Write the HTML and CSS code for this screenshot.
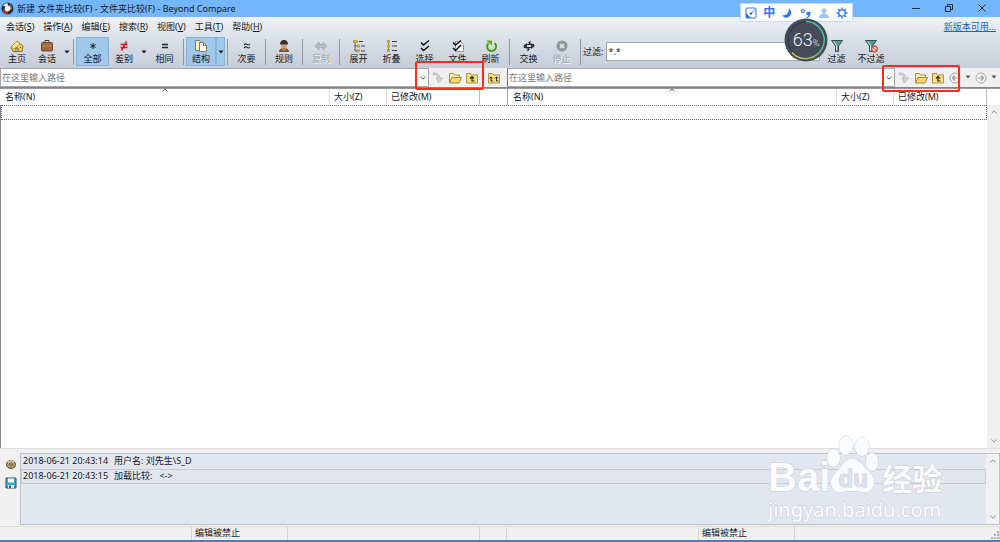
FILE: index.html
```html
<!DOCTYPE html>
<html lang="zh-CN">
<head>
<meta charset="utf-8">
<title>新建 文件夹比较(F) - Beyond Compare</title>
<link rel="stylesheet" href="styles.css">
</head>
<body>
<svg class="defs" aria-hidden="true">
  <symbol id="chev" viewBox="0 0 8 8"><path d="M1.500 2.500 4 5.200 6.500 2.500" fill="none" stroke="currentColor"/></symbol>
  <symbol id="tri" viewBox="0 0 6 4"><path d="M.5.5h5L3 3.500z" fill="currentColor"/></symbol>
  <symbol id="go" viewBox="0 0 14 14"><path d="M2 2c4-.5 7 1.500 7 5h3l-4.500 5L5 7h2C7 5 5 3.500 2 3.500z" fill="#d3d3d3" stroke="#b4b4b4" stroke-width=".7"/></symbol>
  <symbol id="open" viewBox="0 0 14 14"><path d="M1.500 12V2.500h4l1 1.500h5v2.500" fill="#fff0a8" stroke="#a88d45"/><path d="M1.500 12 4 6.500h9.500L11 12z" fill="#f6d768" stroke="#a0853d"/></symbol>
  <symbol id="up" viewBox="0 0 14 14"><path d="M1.500 12V2.500h4l1 1.500h6v8z" fill="#f8de7a" stroke="#ab954e"/><path d="M9.500 10H7V6M5 7.500 7 5.500l2 2" fill="none" stroke="#26221a" stroke-width="1.100"/></symbol>
  <symbol id="upup" viewBox="0 0 14 14"><path d="M1.500 12V2.500h4l1 1.500h6v8z" fill="#f8de7a" stroke="#ab954e"/><path d="M6 10H4V6M2.500 7.500 4 5.800l1.500 1.700M11.500 10h-2V6M8 7.500l1.500-1.700L11 7.500" fill="none" stroke="#26221a" stroke-width=".9"/></symbol>
  <symbol id="back" viewBox="0 0 14 14"><circle cx="7" cy="7" r="5" fill="#f4f4f4" stroke="#aaa"/><path d="M10 7H4.500M7 4.500 4.500 7 7 9.500" fill="none" stroke="#999" stroke-width="1.200"/></symbol>
  <symbol id="fwd" viewBox="0 0 14 14"><circle cx="7" cy="7" r="5" fill="#f4f4f4" stroke="#aaa"/><path d="M4 7h5.500M7 4.500 9.500 7 7 9.500" fill="none" stroke="#999" stroke-width="1.200"/></symbol>
  <symbol id="funnel" viewBox="0 0 14 14"><path d="M1.500 1.500h11L8.500 7v5.500h-3V7z" fill="#519b98" stroke="#3f4c50"/><path d="M4 2.500 6.500 6.500v5" stroke="#c9efe9" fill="none"/></symbol>
</svg>

<header class="title">
  <svg class="logo" viewBox="0 0 14 14"><circle cx="7" cy="7" r="6.500" fill="#2b2b31"/><path d="M2 4a6 6 0 0 1 5-3l1 3-3 1z" fill="#ddd"/><path d="M9 2a6 6 0 0 1 3 6l-3 1z" fill="#777"/><path d="M2 8a5.500 5.500 0 0 0 5 5l1-3-3-2z" fill="#c33b2c"/><circle cx="7" cy="7" r="3" fill="#fff"/></svg>
  <h1>新建 文件夹比较(F) - 文件夹比较(F) - Beyond Compare</h1>
  <div class="wincontrols">
    <button aria-label="最小化"><svg viewBox="0 0 10 10"><path d="M1 5.500h8"/></svg></button>
    <button aria-label="还原"><svg viewBox="0 0 10 10"><path d="M1.500 3.500h5v5h-5zM3.500 3.500v-2h5v5h-2"/></svg></button>
    <button aria-label="关闭"><svg viewBox="0 0 10 10"><path d="m1.500 1.500 7 7m0-7-7 7"/></svg></button>
  </div>
</header>

<div class="chrome">
  <nav class="menu">
    <button>会话(<u>S</u>)</button><button>操作(<u>A</u>)</button><button>编辑(<u>E</u>)</button><button>搜索(<u>R</u>)</button><button>视图(<u>V</u>)</button><button>工具(<u>T</u>)</button><button>帮助(<u>H</u>)</button>
    <a href="#">新版本可用...</a>
  </nav>
  <div class="toolbar">
    <button class="tool narrow"><svg viewBox="0 0 14 14"><path d="M1 8 7 2l6 5-1 5.500H3z" fill="#f1cf52" stroke="#8c7428"/><path d="m1 8 6-6 3 3-6 5z" fill="#fbe98e" stroke="#9b8437" stroke-width=".7"/><path d="M6 12V9h2v3M10 8.500h1" stroke="#6c5617" fill="#fff"/></svg>主页</button>
    <button class="tool narrow"><svg viewBox="0 0 14 14"><path d="M5 3.500v-2h4v2" fill="none" stroke="#533a25"/><rect x="1.500" y="3.500" width="11" height="8.500" rx="1" fill="#a16c43" stroke="#704625"/><path d="M2 7h10" stroke="#bd895e"/></svg>会话</button>
    <button class="drop" aria-label="会话菜单"><svg><use href="#tri"/></svg></button>
    <i class="sep"></i>
    <button class="tool on"><svg viewBox="0 0 14 14"><path d="M7 4v6M4.300 5.500l5.400 3M9.700 5.500l-5.400 3" stroke="#222"/></svg>全部</button>
    <button class="tool narrow"><svg viewBox="0 0 14 14"><path d="M3.500 5.500h7M3.500 8.500h7M9.500 2.500l-5 9" stroke="#e5141c" stroke-width="1.600"/></svg>差别</button>
    <button class="drop" aria-label="差别菜单"><svg><use href="#tri"/></svg></button>
    <button class="tool"><svg viewBox="0 0 14 14"><path d="M4 5.500h6M4 8.500h6" stroke="#222" stroke-width="1.300"/></svg>相同</button>
    <i class="sep"></i>
    <button class="tool narrow on"><svg viewBox="0 0 14 14"><path d="M1.500 1.500h4l1.500 2v8H1.500z" fill="#f9ebbf" stroke="#87765a"/><path d="M5.500 3.500h4l3 3v6h-7z" fill="#fffdf6" stroke="#87765a"/><path d="M9.500 3.500v3h3" fill="none" stroke="#87765a"/></svg>结构</button>
    <button class="drop on" aria-label="结构菜单"><svg><use href="#tri"/></svg></button>
    <i class="sep"></i>
    <button class="tool"><svg viewBox="0 0 14 14"><path d="M4 6q1.500-2 3-.6T10 5M4 9q1.500-2 3-.6T10 8" fill="none" stroke="#222" stroke-width="1.100"/></svg>次要</button>
    <i class="sep"></i>
    <button class="tool mid-size"><svg viewBox="0 0 14 14"><path d="M2 13q0-4 5-4t5 4z" fill="#795333"/><circle cx="7" cy="6.500" r="3" fill="#dba171"/><path d="M3 5.500q0-4.500 4-4.500t4 4.500z" fill="#38302b"/><path d="m5 9.500 2 2 2-2" stroke="#e7bc72" fill="none"/></svg>规则</button>
    <i class="sep"></i>
    <button class="tool mid-size off" disabled><svg viewBox="0 0 14 14"><path d="m1 7 4-4v2.500h4V3l4 4-4 4V8.500H5V11z" fill="#b9bec4" stroke="#9da2a8" stroke-width=".7"/></svg>复制</button>
    <i class="sep"></i>
    <button class="tool"><svg viewBox="0 0 14 14"><path d="M3 3v9h4M3 7h4M3 3h3" fill="none" stroke="#555"/><path d="M1 1h4v3H1zM5 5.500h3v3H5zM5 10.500h3v2.500H5z" fill="#cda12c"/><path d="M7 2.500h4M9 7h4M9 12h4" stroke="#444"/></svg>展开</button>
    <button class="tool"><svg viewBox="0 0 14 14"><path d="M3.500 2v10" stroke="#777"/><path d="M2 1h3v3H2zM2 5.500h3v3H2zM2 10h3v3H2z" fill="#cda12c"/><path d="M7 2.500h5M7 7h5M7 11.500h5" stroke="#444"/></svg>折叠</button>
    <button class="tool"><svg viewBox="0 0 14 14"><path d="m3 3.500 2.500 2.500L11 1.500M3 9l2.500 2.500L11 7" stroke="#111" stroke-width="1.500" fill="none"/></svg>选择</button>
    <button class="tool"><svg viewBox="0 0 14 14"><path d="M4.500 2.500h5l3 3v7h-8z" fill="#fff" stroke="#999"/><path d="m2 3.500 2.500 2.500L10 1.500M2 9l2.500 2.500L10 6" stroke="#111" stroke-width="1.500" fill="none"/></svg>文件</button>
    <button class="tool"><svg viewBox="0 0 14 14"><path d="M10.500 4a4.500 4.500 0 1 1-6 .2" fill="none" stroke="#4a9c12" stroke-width="2"/><path d="M2 1.500h6v5z" fill="#5cad1d"/></svg>刷新</button>
    <i class="sep"></i>
    <button class="tool"><svg viewBox="0 0 14 14"><path d="M4 5.500h8M2 8.500h8" stroke="#222" stroke-width="1.200"/><path d="m1 7 4-3v6zM13 7 9 4v6z" fill="#333"/><path d="m6 4 2.500-2.500v4zM8 10l-2.500 2.500v-4z" fill="#222"/></svg>交换</button>
    <button class="tool off" disabled><svg viewBox="0 0 14 14"><circle cx="7" cy="7" r="5.500" fill="#92979c"/><path d="m5 5 4 4m0-4L5 9" stroke="#eee" stroke-width="1.600"/></svg>停止</button>
    <i class="sep"></i>
    <label for="filter">过滤:</label>
    <div class="combo filter"><input id="filter" value="*.*"><button aria-label="过滤历史"><svg><use href="#chev"/></svg></button></div>
    <button class="tool"><svg><use href="#funnel"/></svg>过滤</button>
    <button class="tool wide"><svg viewBox="0 0 14 14"><use href="#funnel"/><circle cx="10.500" cy="10" r="2.800" fill="#f7d5cd" stroke="#d8412f" stroke-width="1.200"/><path d="m8.500 8 4 4" stroke="#d8412f"/></svg>不过滤</button>
  </div>
</div>

<main>
  <div class="split paths">
    <div class="path">
      <div class="combo"><input aria-label="左侧路径" placeholder="在这里输入路径"><button aria-label="左侧路径历史"><svg><use href="#chev"/></svg></button></div>
      <button class="ico" aria-label="转到"><svg><use href="#go"/></svg></button>
      <button class="ico" aria-label="打开文件夹"><svg><use href="#open"/></svg></button>
      <button class="ico" aria-label="上一级"><svg><use href="#up"/></svg></button>
    </div>
    <button class="ico mid" aria-label="两侧上一级"><svg><use href="#upup"/></svg></button>
    <div class="path">
      <div class="combo"><input aria-label="右侧路径" placeholder="在这里输入路径"><button aria-label="右侧路径历史"><svg><use href="#chev"/></svg></button></div>
      <button class="ico" aria-label="转到"><svg><use href="#go"/></svg></button>
      <button class="ico" aria-label="打开文件夹"><svg><use href="#open"/></svg></button>
      <button class="ico" aria-label="上一级"><svg><use href="#up"/></svg></button>
      <button class="ico" aria-label="后退"><svg><use href="#back"/></svg></button>
      <button class="drop" aria-label="后退历史"><svg><use href="#tri"/></svg></button>
      <button class="ico" aria-label="前进"><svg><use href="#fwd"/></svg></button>
      <button class="drop" aria-label="前进历史"><svg><use href="#tri"/></svg></button>
    </div>
  </div>
  <div class="split heads">
    <div class="cols"><span class="name">名称(N)<svg><use href="#chev"/></svg></span><span>大小(Z)</span><span class="date">已修改(M)</span></div>
    <div></div>
    <div class="cols right"><span class="name">名称(N)<svg><use href="#chev"/></svg></span><span>大小(Z)</span><span class="date">已修改(M)</span></div>
  </div>
  <div class="list">
    <div class="rows"><div class="current"></div></div>
    <div class="scroll"><svg class="flip"><use href="#chev"/></svg><svg><use href="#chev"/></svg></div>
  </div>
</main>

<section class="logpane">
  <div class="logtools">
    <button aria-label="选项"><svg viewBox="0 0 12 12"><ellipse cx="6" cy="6.500" rx="4.500" ry="4" fill="#b29668" stroke="#5d4b32"/><path d="M3 3.500 6 2l3 1.500L8.500 6h-5z" fill="#ddc796"/><ellipse cx="6" cy="6" rx="1.500" ry="1.200" fill="#fff" stroke="#493b28"/></svg></button>
    <button aria-label="保存"><svg viewBox="0 0 12 12"><path d="M1 1h10v10H1z" fill="#26afd3" stroke="#33596a"/><path d="M3 1.500h6v4H3z" fill="#f5fbff"/><path d="M3 8h6v3H3z" fill="#e5edf1"/><path d="M4 8.500h2V11H4z" fill="#355969"/></svg></button>
  </div>
  <div class="log">
    <div class="entries">
      <p>2018-06-21 20:43:14<span>用户名: 刘先生\S_D</span></p>
      <p class="sel">2018-06-21 20:43:15<span>加载比较:&nbsp;&nbsp; &lt;-&gt;</span></p>
    </div>
    <div class="scroll"><svg class="flip"><use href="#chev"/></svg><svg><use href="#chev"/></svg></div>
  </div>
</section>

<footer class="split status">
  <div class="cells"><span></span><span>编辑被禁止</span><span></span></div>
  <div class="cells gap"></div>
  <div class="cells"><span></span><span>编辑被禁止</span><span></span></div>
  <svg class="grip" viewBox="0 0 8 8"><path d="M6 0h2v2H6zM3 3h2v2H3zM6 3h2v2H6zM0 6h2v2H0zM3 6h2v2H3zM6 6h2v2H6z" fill="#b5b5b5"/></svg>
</footer>

<div class="ime">
  <svg viewBox="0 0 12 12"><rect x="1" y="1" width="10" height="10" rx="1" fill="#fff" stroke="#2f76ee"/><path d="M1 6v5h5z" fill="#2f76ee"/><circle cx="6" cy="6.500" r="1.300" fill="#2f76ee"/><path d="M6 6.500 10 2.500" stroke="#2f76ee"/></svg>
  <b>中</b>
  <svg viewBox="0 0 12 12"><path d="M8 1q5 6-1 9.500-3 1-6-2Q8 8.500 8 1z" fill="#2f76ee"/></svg>
  <svg viewBox="0 0 12 12"><circle cx="3" cy="4" r="1.500" fill="none" stroke="#2f76ee" stroke-width="1.200"/><path d="M6.500 5h4q.5 4-3.500 6.500l-.500-1q2-1.500 1.800-2.500H6.500z" fill="#2f76ee"/></svg>
  <svg viewBox="0 0 12 12"><circle cx="6" cy="3.700" r="2.500" fill="#a4c2f7"/><path d="M1 11q0-4.500 5-4.500T11 11z" fill="#a4c2f7"/></svg>
  <svg viewBox="0 0 12 12"><circle cx="6" cy="6" r="3.200" fill="none" stroke="#2f76ee" stroke-width="1.300"/><path d="M6 .5v2M6 9.500v2M.5 6h2M9.500 6h2M2.100 2.100l1.400 1.400M8.500 8.500l1.400 1.400M9.900 2.100 8.500 3.500M3.500 8.500 2.100 9.900" stroke="#2f76ee" stroke-width="1.400"/></svg>
</div>

<div class="gauge">
  <svg viewBox="0 0 44 44"><defs><linearGradient id="ring" x1="1" y1="0" x2="0" y2="1"><stop offset="0" stop-color="#35c9bd"/><stop offset=".5" stop-color="#69ba77"/><stop offset="1" stop-color="#e2c83c"/></linearGradient></defs><circle cx="22" cy="22" r="21.500" fill="#474b59"/><circle cx="22" cy="22" r="18" fill="none" stroke="#3a3e4c" stroke-width="1.500"/><path d="M22 3.500a18.500 18.500 0 1 1-14 31" fill="none" stroke="url(#ring)" stroke-width="1.500"/></svg>
  <span>63<small>%</small></span>
</div>

<div class="mark mark-left"></div>
<div class="mark mark-right"></div>

<div class="watermark">
  <div class="brand"><span>Bai</span>
    <div class="paw"><svg viewBox="0 0 54 60"><g fill="#fafbfc" stroke="#c9ccd1"><ellipse cx="7.500" cy="23" rx="6.500" ry="9"/><ellipse cx="20" cy="10.500" rx="7" ry="9.500"/><ellipse cx="36" cy="11.500" rx="7" ry="9.500"/><ellipse cx="46" cy="27" rx="6.500" ry="9"/><path d="M26 24q7 0 12 8 9 7 10 14 0 12-12 11-10-2-20 0Q5 58 5 46q1-6 9-13 5-9 12-9z"/></g></svg><em>du</em></div>
    <span class="cn">经验</span></div>
  <div class="url">jingyan.baidu.com</div>
</div>
</body>
</html>
```
FILE: styles.css
```css
* { box-sizing: border-box; }

body {
  margin: 0;
  height: 100vh;
  display: flex;
  flex-direction: column;
  position: relative;
  overflow: hidden;
  background: #f0f0f0;
  border-bottom: 2px solid #3585cf;
  color: #16181c;
  font: 9px/12px "Noto Sans", "Noto Sans CJK SC", sans-serif;
}

button, input {
  margin: 0;
  padding: 0;
  border: 0;
  background: none;
  color: inherit;
  font: inherit;
}

svg { display: block; flex: none; }
p, h1 { margin: 0; font: inherit; }
.defs { position: absolute; width: 0; height: 0; }

.title {
  height: 17px;
  flex: none;
  display: flex;
  align-items: center;
  gap: 3px;
  padding-left: 1px;
  background: #73b6fb;
}
.logo { width: 13px; height: 13px; }
.wincontrols { display: flex; margin-left: auto; padding: 0 2px 2px 0; }
.wincontrols button { width: 33px; display: flex; justify-content: center; }
.wincontrols svg { width: 10px; height: 10px; fill: none; stroke: #1d2a38; }

.chrome { flex: none; background: linear-gradient(#edf1f5, #dbe0e8 45%, #c5cdd7); }
.menu { height: 20px; display: flex; align-items: center; gap: 9px; padding: 0 4px 0 6px; }
.menu a { margin-left: auto; color: #1767cf; }

.toolbar { height: 31px; display: flex; align-items: center; padding: 0 111px 2px 2px; }
.tool {
  width: 33px;
  height: 29px;
  flex: none;
  display: flex;
  flex-direction: column;
  align-items: center;
  white-space: nowrap;
  padding-top: 2px;
}
.tool svg { width: 14px; height: 14px; }
.narrow { width: 30px; }
.mid-size { width: 32px; }
.wide { width: 36px; }
.on { background: #a0c8ea; box-shadow: inset 0 0 0 1px #82b3dc; }
.off { color: #a0a5ab; text-shadow: 1px 1px #eef1f4; }
.drop { width: 9px; height: 29px; flex: none; display: flex; align-items: center; justify-content: center; }
.drop svg { width: 6px; height: 4px; }
.sep { width: 1px; height: 26px; margin: 0 2px; flex: none; background: #9198a2; }
.toolbar label { margin-right: 3px; }

.combo {
  display: flex;
  flex: 1;
  min-width: 0;
  background: #fff;
  border: 1px solid #a4a7ab;
}
.combo input { flex: 1; min-width: 0; padding-left: 1px; outline: 0; }
.combo input::placeholder { color: #777; }
.combo button { width: 12px; display: flex; align-items: center; justify-content: center; border-left: 1px solid #b5b5b5; color: #555; }
.combo svg { width: 8px; height: 8px; }
.filter { height: 19px; }
.filter button { border: 0; }

main { flex: 1; min-height: 0; display: flex; flex-direction: column; box-shadow: inset 1px 0 #8a8a8a; }
.split { display: grid; grid-template-columns: 480fr 27px 493fr; flex: none; }
.paths { height: 20px; border-bottom: 1px solid #858585; }
.path { display: flex; min-width: 0; }
.ico { width: 17px; display: flex; align-items: center; justify-content: center; }
.ico svg { width: 14px; height: 14px; }
.path .drop { height: 18px; color: #555; }
.mid { width: 27px; }
.path:last-child { padding-right: 2px; }
.path:last-child .combo { border-left-color: #777; }

.heads { height: 17px; background: #fff; border-top: 1px solid #999; }
.cols { display: grid; grid-template-columns: 1fr 57px 93px; border-right: 1px solid #bbb; }
.cols.right { margin-right: 13px; border-left: 1px solid #aaa; }
.cols span { display: flex; align-items: center; padding-left: 4px; border-left: 1px solid #ddd; }
.cols .name { position: relative; border: 0; padding-left: 5px; }
.name svg { position: absolute; left: 50%; top: -3px; width: 8px; height: 8px; margin-left: -4px; transform: scaleY(-1); color: #666; }

.list { flex: 1; display: flex; min-height: 0; background: #fff; border-left: 1px solid #8a8a8a; }
.rows { flex: 1; }
.current { height: 15px; border: 1px dotted #666; }
.scroll {
  width: 13px;
  flex: none;
  display: flex;
  flex-direction: column;
  justify-content: space-between;
  align-items: center;
  padding: 3px 0;
  background: #f0f0f0;
  color: #999;
}
.scroll svg { width: 8px; height: 8px; }
.flip { transform: scaleY(-1); }

.logpane { height: 78px; flex: none; display: flex; padding: 4px 0 1px; border-top: 1px solid #ddd; }
.logtools { width: 20px; display: flex; flex-direction: column; align-items: center; gap: 7px; padding: 5px 0 0 2px; }
.logtools svg { width: 12px; height: 12px; }
.log { flex: 1; display: flex; background: #e2e6ee; border: 1px solid #bfc2c7; }
.entries { flex: 1; }
.entries p { height: 15px; padding: 0 1px; border: 1px solid transparent; white-space: nowrap; line-height: 12px; }
.entries span { margin-left: 6px; }
.entries .sel { border-color: #c9cbce; }

.status { height: 14px; position: relative; border-top: 1px solid #ddd; }
.cells { display: grid; grid-template-columns: 191px 96px 1fr; border-right: 1px solid #d5d5d5; }
.cells span + span { border-left: 1px solid #d5d5d5; padding-left: 3px; white-space: nowrap; }
.grip { position: absolute; right: 1px; bottom: 1px; width: 8px; height: 8px; }

.ime {
  position: absolute;
  top: 3px;
  right: 147px;
  width: 113px;
  height: 19px;
  display: flex;
  align-items: center;
  justify-content: space-between;
  padding: 0 4px;
  background: #fff;
  border: 1px solid #c6daf3;
}
.ime svg { width: 12px; height: 12px; }
.ime b { color: #2f76ee; font-size: 12px; }

.gauge { position: absolute; top: 18px; right: 172px; width: 44px; height: 44px; }
.gauge span { position: absolute; inset: 0; text-align: center; color: #f2f3f5; font: 300 18px/44px Roboto, sans-serif; }
.gauge small { font-size: 9px; }

.mark { position: absolute; border: 2px solid #fb2a1c; border-radius: 2px; }
.mark-left { left: 415px; top: 61px; width: 69px; height: 29px; }
.mark-right { right: 40px; top: 65px; width: 78px; height: 27px; }

.watermark { position: absolute; right: 52px; bottom: 18px; width: 180px; color: #fafbfc; -webkit-text-stroke: 1px #c9ccd1; paint-order: stroke fill; }
.brand { display: flex; align-items: flex-end; margin-bottom: 3px; font: bold 40px/36px "Liberation Sans", sans-serif; }
.paw { position: relative; width: 54px; height: 60px; margin: 0 2px 0 -4px; }
.paw svg { width: 54px; height: 60px; }
.paw em { position: absolute; left: 0; right: 0; bottom: 2px; text-align: center; font: bold 24px/28px "Liberation Sans", sans-serif; color: #dfe2e8; }
.brand .cn { font: bold 30px/36px "Noto Sans CJK SC", sans-serif; }
.url { font: 20px/24px "Noto Sans", sans-serif; }
```
